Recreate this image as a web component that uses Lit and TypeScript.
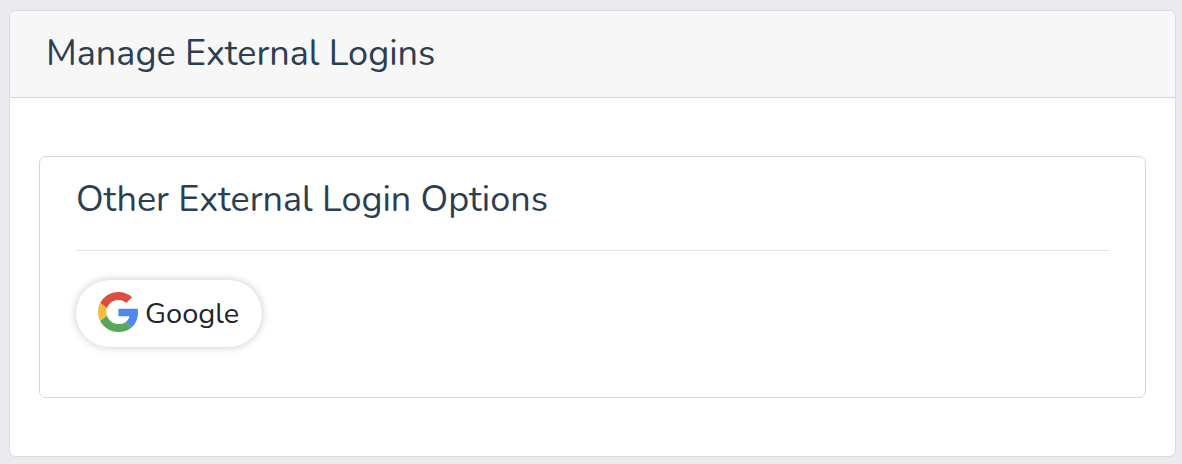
import { LitElement, html, css } from "lit";
import { customElement } from "lit/decorators.js";

@customElement("google-logo")
export class GoogleLogo extends LitElement {
  static styles = css`
    :host {
      display: block;
      width: 40px;
      height: 40px;
    }
    .logo {
      display: block;
      width: 100%;
      height: 100%;
    }
  `;

  render() {
    return html`
      <svg class="logo" viewBox="0 0 47 48" preserveAspectRatio="none" aria-hidden="true">
        <path fill="#db4f40" d="M24 9.5c3.54 0 6.71 1.22 9.21 3.6l6.85-6.85C35.9 2.38 30.47 0 24 0 14.62 0 6.51 5.38 2.56 13.22l7.98 6.19C12.43 13.72 17.74 9.5 24 9.5z"></path>
        <path fill="#5087ec" d="M46.98 24.55c0-1.57-.15-3.09-.38-4.55H24v9.02h12.94c-.58 2.96-2.26 5.48-4.78 7.18l7.73 6c4.51-4.18 7.09-10.36 7.09-17.65z"></path>
        <path fill="#f2bd42" d="M10.53 28.59c-.48-1.45-.76-2.99-.76-4.59s.27-3.14.76-4.59l-7.98-6.19C.92 16.46 0 20.12 0 24c0 3.88.92 7.54 2.56 10.78l7.97-6.19z"></path>
        <path fill="#58a55c" d="M24 48c6.48 0 11.93-2.13 15.89-5.81l-7.73-6c-2.15 1.45-4.92 2.3-8.16 2.3-6.26 0-11.57-4.22-13.47-9.91l-7.98 6.19C6.51 42.62 14.62 48 24 48z"></path>
      </svg>
    `;
  }
}

@customElement("app-root")
export class AppRoot extends LitElement {
  static styles = css`
    :host {
      display: block;
      box-sizing: border-box;
      min-height: 100vh;
      padding: 10px 6px 7px 9px;
      background: #eaebef;
      color: #212529;
      font-family: Nunito, "Open Sans", sans-serif;
      font-size: 29px;
      line-height: 44px;
    }
    .card {
      border: 1px solid #d9dbdd;
      border-radius: 7px;
      background: #fff;
      overflow: hidden;
    }
    .header {
      padding: 21px 36px;
      border-bottom: 1px solid #d5d6d7;
      background: #f7f7f7;
    }
    .title {
      margin: 0;
      color: #2c3e50;
      font-size: 36px;
      font-weight: 400;
      line-height: 44px;
    }
    .body {
      padding: 58px 29px;
    }
    .panel {
      padding: 21px 36px 50px;
      border: 1px solid #d5d6d7;
      border-radius: 7px;
    }
    .rule {
      height: 1px;
      margin: 28px 0 29px;
      border: 0;
      background: #e2e3e4;
    }
    .provider {
      display: inline-flex;
      align-items: flex-start;
      gap: 7px;
      padding: 12px 23px 11px 22px;
      border: 0;
      border-radius: 34px;
      background: #fff;
      box-shadow: 0 0 8px rgba(0, 0, 0, 0.22);
      color: inherit;
      font: inherit;
      vertical-align: top;
      cursor: pointer;
    }
  `;

  render() {
    return html`
      <main class="card">
        <header class="header">
          <h1 class="title">Manage External Logins</h1>
        </header>
        <div class="body">
          <section class="panel">
            <h2 class="title">Other External Login Options</h2>
            <hr class="rule" />
            <button class="provider" type="button">
              <google-logo></google-logo>
              <span>Google</span>
            </button>
          </section>
        </div>
      </main>
    `;
  }
}
